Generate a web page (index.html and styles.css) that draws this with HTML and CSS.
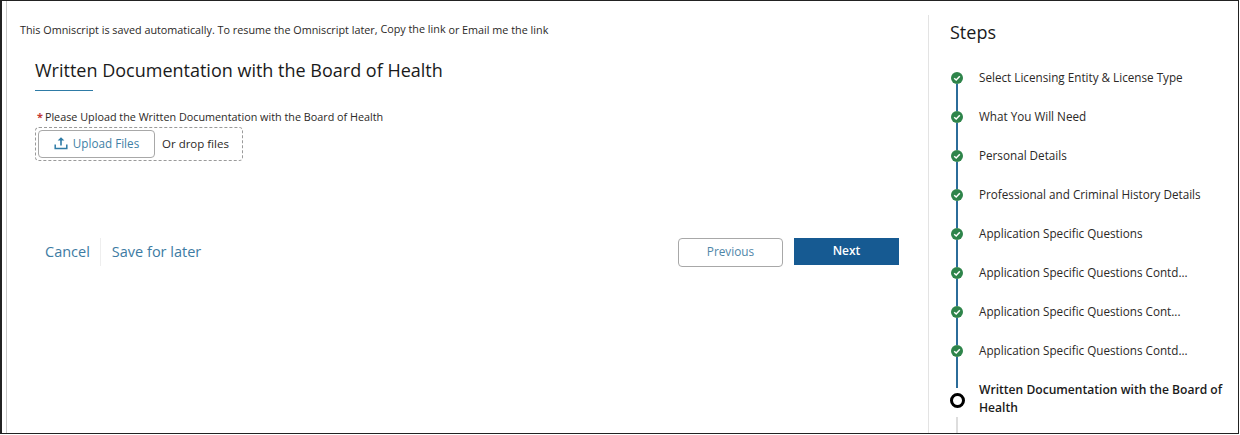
FILE: index.html
```html
<!DOCTYPE html>
<html lang="en">
<head>
    <meta charset="UTF-8">
    <title>Written Documentation with the Board of Health</title>
    <link rel="stylesheet" href="styles.css">
</head>
<body>
    <div class="frame">
        <main class="content">
            <p class="save-note">This Omniscript is saved automatically. To resume the Omniscript later, <a class="raised">Copy the link</a> or Email me the link</p>
            <h1 class="title">Written Documentation with the Board of Health</h1>
            <div class="title-rule"></div>
            <div class="field-label"><span class="required">*</span>Please Upload the Written Documentation with the Board of Health</div>
            <div class="dropzone">
                <button class="upload-button">
                    <svg class="upload-icon" viewBox="0 0 14 14" width="14" height="14">
                        <path d="M7 1.2 L3.6 4.6 H6.2 V9.6 H7.8 V4.6 H10.4 Z" fill="#2e7ba6"/>
                        <path d="M1.2 8.6 V12.6 H12.8 V8.6" fill="none" stroke="#2e7ba6" stroke-width="1.5"/>
                    </svg>
                    Upload Files
                </button>
                <span class="drop-text">Or drop files</span>
            </div>
            <div class="actions">
                <a class="link cancel">Cancel</a>
                <a class="link save-later">Save for later</a>
                <div class="nav-buttons">
                    <button class="btn-previous">Previous</button>
                    <button class="btn-next">Next</button>
                </div>
            </div>
        </main>

        <aside class="steps">
            <h2 class="steps-title">Steps</h2>
            <ul class="step-list" id="stepList">
                <li class="step done"><span class="dot"><svg viewBox="0 0 12 12" width="12" height="12"><circle cx="6" cy="6" r="6" fill="#2e844a"/><path d="M3.2 6.2 L5.2 8 L8.8 4.3" fill="none" stroke="#fff" stroke-width="1.5"/></svg></span><span class="step-name">Select Licensing Entity &amp; License Type</span></li>
                <li class="step done"><span class="dot"><svg viewBox="0 0 12 12" width="12" height="12"><circle cx="6" cy="6" r="6" fill="#2e844a"/><path d="M3.2 6.2 L5.2 8 L8.8 4.3" fill="none" stroke="#fff" stroke-width="1.5"/></svg></span><span class="step-name">What You Will Need</span></li>
                <li class="step done"><span class="dot"><svg viewBox="0 0 12 12" width="12" height="12"><circle cx="6" cy="6" r="6" fill="#2e844a"/><path d="M3.2 6.2 L5.2 8 L8.8 4.3" fill="none" stroke="#fff" stroke-width="1.5"/></svg></span><span class="step-name">Personal Details</span></li>
                <li class="step done"><span class="dot"><svg viewBox="0 0 12 12" width="12" height="12"><circle cx="6" cy="6" r="6" fill="#2e844a"/><path d="M3.2 6.2 L5.2 8 L8.8 4.3" fill="none" stroke="#fff" stroke-width="1.5"/></svg></span><span class="step-name">Professional and Criminal History Details</span></li>
                <li class="step done"><span class="dot"><svg viewBox="0 0 12 12" width="12" height="12"><circle cx="6" cy="6" r="6" fill="#2e844a"/><path d="M3.2 6.2 L5.2 8 L8.8 4.3" fill="none" stroke="#fff" stroke-width="1.5"/></svg></span><span class="step-name">Application Specific Questions</span></li>
                <li class="step done"><span class="dot"><svg viewBox="0 0 12 12" width="12" height="12"><circle cx="6" cy="6" r="6" fill="#2e844a"/><path d="M3.2 6.2 L5.2 8 L8.8 4.3" fill="none" stroke="#fff" stroke-width="1.5"/></svg></span><span class="step-name">Application Specific Questions Contd...</span></li>
                <li class="step done"><span class="dot"><svg viewBox="0 0 12 12" width="12" height="12"><circle cx="6" cy="6" r="6" fill="#2e844a"/><path d="M3.2 6.2 L5.2 8 L8.8 4.3" fill="none" stroke="#fff" stroke-width="1.5"/></svg></span><span class="step-name">Application Specific Questions Cont...</span></li>
                <li class="step done"><span class="dot"><svg viewBox="0 0 12 12" width="12" height="12"><circle cx="6" cy="6" r="6" fill="#2e844a"/><path d="M3.2 6.2 L5.2 8 L8.8 4.3" fill="none" stroke="#fff" stroke-width="1.5"/></svg></span><span class="step-name">Application Specific Questions Contd...</span></li>
                <li class="step current"><span class="dot"><span class="ring"></span></span><span class="step-name">Written Documentation with the Board of Health</span></li>
            </ul>
        </aside>
    </div>
</body>
</html>
```

FILE: styles.css
```css
html, body {
    margin: 0;
    padding: 0;
    background: #fff;
}

body {
    width: 1240px;
    height: 435px;
    overflow: hidden;
    font-family: "Open Sans", sans-serif;
    color: #2b2826;
}

.frame {
    box-sizing: border-box;
    width: 1239px;
    height: 434px;
    border: 1px solid #222;
    border-left-width: 2px;
    display: flex;
    padding-top: 14px;
    overflow: hidden;
    box-shadow: inset 4px 0 0 #fff, inset 5px 0 0 #c9c9c9;
}

.content {
    width: 927px;
    box-sizing: border-box;
    padding: 0 29px 0 18px;
    border-right: 1px solid #e3e3e3;
    flex-shrink: 0;
}

.save-note {
    margin: 8px 0 0;
    font-size: 10.8px;
    line-height: 14px;
}

.raised {
    position: relative;
    top: -1px;
}

.title {
    margin: 20px 0 0 15px;
    font-size: 18px;
    line-height: 26px;
    font-weight: 400;
    color: #1a1a1a;
}

.title-rule {
    width: 58px;
    height: 1px;
    margin: 7px 0 0 15px;
    background: #2e7ba6;
}

.field-label {
    margin: 19px 0 0 17px;
    font-size: 10.8px;
    line-height: 14px;
}

.required {
    color: #c23934;
    font-weight: 700;
    margin-right: 2px;
}

.dropzone {
    display: inline-flex;
    align-items: center;
    gap: 7px;
    width: 208px;
    height: 34px;
    box-sizing: border-box;
    margin: 3px 0 0 15px;
    padding: 0 2px;
    border: 1px dashed #9a9a9a;
    border-radius: 4px;
}

.upload-button {
    display: flex;
    align-items: center;
    justify-content: center;
    gap: 5px;
    width: 117px;
    height: 28px;
    padding: 0 0 2px;
    background: #fff;
    border: 1px solid #a8a8a8;
    border-radius: 4px;
    font-family: inherit;
    font-size: 11.7px;
    color: #3f7fa6;
}

.drop-text {
    font-size: 11.5px;
    margin-bottom: 2px;
}

.actions {
    display: flex;
    align-items: center;
    margin-top: 76px;
    height: 30px;
}

.link {
    font-size: 14.5px;
    line-height: 28px;
    color: #3d7ba3;
}

.cancel {
    margin-left: 25px;
    padding-right: 10px;
    border-right: 1px solid #eee;
}

.save-later {
    margin-left: 11px;
}

.nav-buttons {
    display: flex;
    gap: 11px;
    margin-left: auto;
}

.btn-previous {
    width: 105px;
    height: 29px;
    padding: 0 0 3px;
    background: #fff;
    border: 1px solid #a8a8a8;
    border-radius: 4px;
    font-family: inherit;
    font-size: 11.8px;
    color: #4f86a8;
}

.btn-next {
    width: 105px;
    height: 27px;
    padding: 0 0 2px;
    background: #165a92;
    border: none;
    font-family: inherit;
    font-size: 12px;
    font-weight: 600;
    color: #fff;
}

.steps {
    flex: 1;
    padding-left: 21px;
}

.steps-title {
    margin: 5px 0 0;
    font-size: 18px;
    line-height: 24px;
    font-weight: 400;
    color: #1a1a1a;
}

.step-list {
    list-style: none;
    margin: 24px 0 0;
    padding: 0 0 0 1px;
}

.step {
    position: relative;
    display: flex;
    align-items: flex-start;
    gap: 16px;
    height: 39px;
    font-size: 11.7px;
    line-height: 18px;
}

.dot {
    position: relative;
    z-index: 1;
    width: 12px;
    height: 12px;
    margin-top: 4px;
    flex-shrink: 0;
    background: #fff;
    display: block;
    line-height: 0;
}

/* connector to next step */
.step::after {
    content: "";
    position: absolute;
    left: 5px;
    top: 16px;
    width: 2px;
    height: 27px;
    background: #2b6c99;
}

.current {
    height: auto;
    font-size: 12.1px;
    font-weight: 600;
    color: #1a1a1a;
}

.current::before {
    content: "";
    position: absolute;
    left: 5px;
    top: 0;
    width: 2px;
    height: 8px;
    background: #2b6c99;
}

.current::after {
    top: 37px;
    height: 30px;
    background: #ddd;
}

.current .dot {
    margin-top: 13px;
}

.ring {
    display: block;
    box-sizing: border-box;
    width: 15px;
    height: 15px;
    margin-left: -1px;
    border: 3.5px solid #000;
    border-radius: 50%;
    background: #fff;
}

.current .step-name {
    width: 250px;
    padding-top: 1px;
}
```
